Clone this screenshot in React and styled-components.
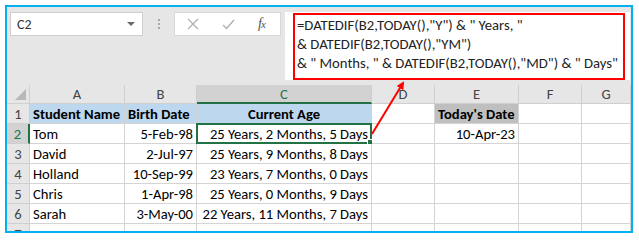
import React from "react";
import styled, { createGlobalStyle } from "styled-components";

const Global = createGlobalStyle`
  html, body { margin: 0; padding: 0; background: #ffffff; }
  body { font-family: Carlito, Lato, "Liberation Sans", sans-serif; }
`;

const Frame = styled.div`
  position: relative;
  box-sizing: border-box;
  margin: 5px;
  width: 628px;
  height: 228px;
  border: 2px solid #00b0f0;
  background: #e6e6e6;
  overflow: hidden;
  display: flex;
  flex-direction: column;
`;

const Toolbar = styled.div`
  display: flex;
  align-items: flex-start;
  padding: 5px 1px 0 3px;
  height: 68px;
`;

const NameBox = styled.div`
  box-sizing: border-box;
  width: 133px;
  height: 24px;
  background: #fff;
  border: 1px solid #d0d0d0;
  display: flex;
  align-items: center;
  justify-content: space-between;
  padding: 0 6px 0 6px;
  font-size: 14px;
  color: #333;
`;

const Caret = styled.span`
  width: 0;
  height: 0;
  border-left: 4px solid transparent;
  border-right: 4px solid transparent;
  border-top: 4px solid #6a6a6a;
  margin-right: 1px;
`;

const Grip = styled.div`
  width: 31px;
  height: 24px;
  display: flex;
  flex-direction: column;
  align-items: center;
  justify-content: center;
  gap: 2px;
  & > span {
    width: 2px;
    height: 2px;
    background: #a8a8a8;
  }
`;

const Buttons = styled.div`
  box-sizing: border-box;
  width: 107px;
  height: 24px;
  background: #fff;
  border: 1px solid #d8d8d8;
  display: flex;
  align-items: center;
  padding: 0 0 0 12px;
  gap: 23px;
`;

const Fx = styled.span`
  font-family: "Liberation Serif", serif;
  font-style: italic;
  font-size: 14px;
  color: #555;
  letter-spacing: -1px;
  & > small { font-size: 11px; }
`;

const FormulaBar = styled.div`
  box-sizing: border-box;
  margin-left: 4px;
  width: 345px;
  height: 68px;
  background: #fff;
  padding: 1px 5px 0 8px;
`;

const RedBox = styled.div`
  box-sizing: border-box;
  height: 67px;
  border: 2px solid #ff0000;
  padding: 1px 0 0 2px;
  font-size: 14.7px;
  line-height: 19px;
  color: #222;
  white-space: pre;
`;

const Sheet = styled.div`
  margin-top: 5px;
  display: grid;
  grid-template-columns: 23px 95px 72px 175px 63px 84px 63px 1fr;
  grid-template-rows: 19px repeat(7, 20px);
  background: #fff;
`;

const ColHead = styled.div`
  box-sizing: border-box;
  background: ${(p) => (p.$sel ? "#d2d2d2" : "#e6e6e6")};
  border-right: 1px solid #cfcfcf;
  border-bottom: ${(p) => (p.$sel ? "2px solid #217346" : "1px solid #cfcfcf")};
  color: ${(p) => (p.$sel ? "#217346" : "#444")};
  font-size: 14.6px;
  display: flex;
  align-items: center;
  justify-content: center;
  padding-top: ${(p) => (p.$sel ? "1px" : "0")};
`;

const Corner = styled.div`
  box-sizing: border-box;
  background: #e6e6e6;
  border-right: 1px solid #cfcfcf;
  border-bottom: 1px solid #cfcfcf;
  display: flex;
  align-items: flex-end;
  justify-content: flex-end;
  padding: 0 3px 3px 0;
`;

const RowHead = styled.div`
  box-sizing: border-box;
  background: ${(p) => (p.$sel ? "#d2d2d2" : "#e6e6e6")};
  border-bottom: 1px solid #cfcfcf;
  border-right: ${(p) => (p.$sel ? "2px solid #217346" : "1px solid #cfcfcf")};
  color: ${(p) => (p.$sel ? "#217346" : "#444")};
  font-size: 14.6px;
  display: flex;
  align-items: center;
  justify-content: center;
`;

const Cell = styled.div`
  position: relative;
  box-sizing: border-box;
  border-right: 1px solid #d4d4d4;
  border-bottom: 1px solid #d4d4d4;
  background: ${(p) => p.$bg || "#fff"};
  font-size: 14.6px;
  font-weight: ${(p) => (p.$bold ? 700 : 400)};
  color: #000;
  display: flex;
  align-items: center;
  justify-content: ${(p) => (p.$right ? "flex-end" : p.$center ? "center" : "flex-start")};
  padding: 0 3px 0 3px;
  white-space: nowrap;
  overflow: visible;
`;

const Active = styled.div`
  position: absolute;
  left: -1px;
  top: -1px;
  right: -1px;
  bottom: -1px;
  border: 2px solid #217346;
  pointer-events: none;
  &::after {
    content: "";
    position: absolute;
    right: -4px;
    bottom: -4px;
    width: 5px;
    height: 5px;
    background: #217346;
    border: 1px solid #fff;
  }
`;

const Arrow = styled.svg`
  position: absolute;
  left: 0;
  top: 0;
  pointer-events: none;
`;

const cols = ["A", "B", "C", "D", "E", "F", "G"];

const data = [
  ["Tom", "5-Feb-98", "25 Years, 2 Months, 5 Days"],
  ["David", "2-Jul-97", "25 Years, 9 Months, 8 Days"],
  ["Holland", "10-Sep-99", "23 Years, 7 Months, 0 Days"],
  ["Chris", "1-Apr-98", "25 Years, 0 Months, 9 Days"],
  ["Sarah", "3-May-00", "22 Years, 11 Months, 7 Days"],
];

export default function App() {
  return (
    <>
      <Global />
      <Frame>
        <Toolbar>
          <NameBox>
            <span>C2</span>
            <Caret />
          </NameBox>
          <Grip>
            <span />
            <span />
            <span />
          </Grip>
          <Buttons>
            <svg width="12" height="12" viewBox="0 0 12 12">
              <path d="M1 1L11 11M11 1L1 11" stroke="#b0b0b0" strokeWidth="1.3" fill="none" />
            </svg>
            <svg width="13" height="11" viewBox="0 0 13 11">
              <path d="M1 6L4.5 9.5L12 1" stroke="#b0b0b0" strokeWidth="1.4" fill="none" />
            </svg>
            <Fx>
              f<small>x</small>
            </Fx>
          </Buttons>
          <FormulaBar>
            <RedBox>
              {'=DATEDIF(B2,TODAY(),"Y") & " Years, "\n& DATEDIF(B2,TODAY(),"YM")\n& " Months, " & DATEDIF(B2,TODAY(),"MD") & " Days"'}
            </RedBox>
          </FormulaBar>
        </Toolbar>
        <Sheet>
          <Corner>
            <svg width="11" height="11" viewBox="0 0 11 11">
              <path d="M11 0L11 11L0 11Z" fill="#b8b8b8" />
            </svg>
          </Corner>
          {cols.map((c) => (
            <ColHead key={c} $sel={c === "C"}>
              {c}
            </ColHead>
          ))}
          <RowHead>1</RowHead>
          <Cell $bg="#bdd7ee" $bold>Student Name</Cell>
          <Cell $bg="#bdd7ee" $bold>Birth Date</Cell>
          <Cell $bg="#bdd7ee" $bold $center>Current Age</Cell>
          <Cell />
          <Cell $bg="#bfbfbf" $bold>Today's Date</Cell>
          <Cell />
          <Cell />
          {data.map((r, i) => (
            <React.Fragment key={i}>
              <RowHead $sel={i === 0}>{i + 2}</RowHead>
              <Cell>{r[0]}</Cell>
              <Cell $right>{r[1]}</Cell>
              <Cell $right>
                {r[2]}
                {i === 0 && <Active />}
              </Cell>
              <Cell />
              <Cell $right>{i === 0 ? "10-Apr-23" : ""}</Cell>
              <Cell />
              <Cell />
            </React.Fragment>
          ))}
          <RowHead>7</RowHead>
          {cols.map((c) => (
            <Cell key={c} />
          ))}
        </Sheet>
        <Arrow width="628" height="228" viewBox="0 0 628 228">
          <defs>
            <marker id="ah" markerWidth="8" markerHeight="8" refX="6" refY="4" orient="auto" markerUnits="userSpaceOnUse">
              <path d="M0 0L8 4L0 8Z" fill="#ff0000" />
            </marker>
          </defs>
          <line x1="365" y1="127" x2="396" y2="76" stroke="#ff0000" strokeWidth="2" markerEnd="url(#ah)" />
        </Arrow>
      </Frame>
    </>
  );
}
